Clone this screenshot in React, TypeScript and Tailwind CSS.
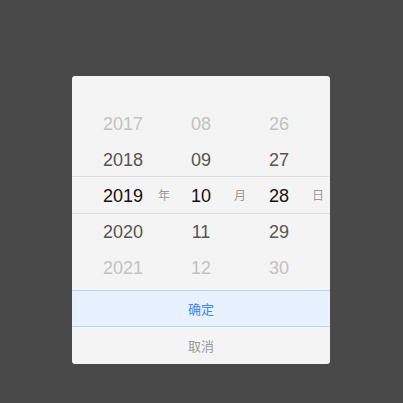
const years = ["2017", "2018", "2019", "2020", "2021"];
const months = ["08", "09", "10", "11", "12"];
const days = ["26", "27", "28", "29", "30"];

// colour per row: far, near, selected, near, far
const tones = [
  "text-[#c2c2c2]",
  "text-[#555555]",
  "text-[#111111]",
  "text-[#555555]",
  "text-[#c2c2c2]",
];

function Column({ items }: { items: string[] }) {
  return (
    <div className="w-[70px] flex flex-col">
      {items.map((v, i) => (
        <div
          key={v}
          className={`h-[36px] flex items-center justify-center text-[18px] ${tones[i]}`}
        >
          {v}
        </div>
      ))}
    </div>
  );
}

export default function App() {
  return (
    <div
      className="w-[403px] h-[403px] bg-[#494949] pt-[76px] pl-[72px]"
      style={{ fontFamily: '"Liberation Sans", Arial, "Noto Sans CJK SC", sans-serif' }}
    >
      <div className="w-[258px] h-[288px] bg-[#f4f4f4] rounded-[3px] overflow-hidden flex flex-col">
        <div className="relative h-[214px] pt-[30px] pl-[16px] flex gap-[8px]">
          <div className="absolute left-0 right-0 top-[100px] h-[38px] border-y border-[#dcdcdc]" />
          <Column items={years} />
          <Column items={months} />
          <Column items={days} />
          <span className="absolute left-[86px] top-[111px] text-[12px] text-[#9a9a9a]">年</span>
          <span className="absolute left-[162px] top-[111px] text-[12px] text-[#9a9a9a]">月</span>
          <span className="absolute left-[240px] top-[111px] text-[12px] text-[#9a9a9a]">日</span>
        </div>
        <button className="h-[37px] pt-[2px] bg-[#e8f1ff] border-y border-[#b8d4fb] text-[13px] text-[#3d86f0]">
          确定
        </button>
        <button className="h-[37px] pt-[2px] text-[13px] text-[#999999]">取消</button>
      </div>
    </div>
  );
}
